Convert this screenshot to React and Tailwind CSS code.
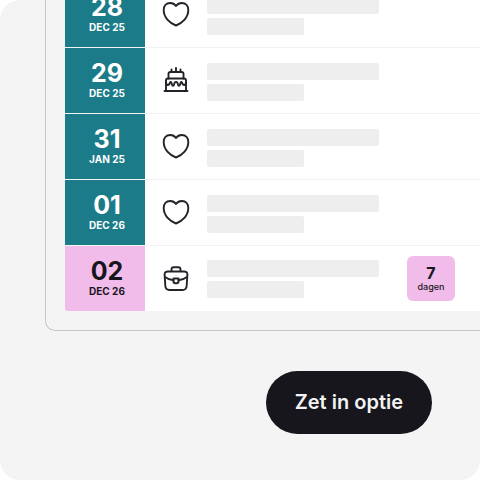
import React from 'react';

const days = [
  { day: '28', month: 'DEC 25', icon: 'heart' },
  { day: '29', month: 'DEC 25', icon: 'cake' },
  { day: '31', month: 'JAN 25', icon: 'heart' },
  { day: '01', month: 'DEC 26', icon: 'heart' },
  { day: '02', month: 'DEC 26', icon: 'briefcase', daysLeft: 7 },
];

const HeartIcon = () => (
  <path d="M14 5C12.500 2.800 10.500 2 8.200 2C4.200 2 1.700 5 1.700 9C1.700 16.500 7.500 22 14 24.500C20.500 22 26.300 16.500 26.300 9C26.300 5 23.800 2 19.800 2C17.500 2 15.500 2.800 14 5Z" />
);

const CakeIcon = () => (
  <>
    <path d="M2.500 24H25.500" />
    <path d="M4 24V13.500Q4 11.500 6 11.500H22Q24 11.500 24 13.500V24" />
    <path d="M6.500 11.500V7Q6.500 5 8.500 5H19.500Q21.500 5 21.500 7V11.500" />
    <path d="M4 14.500C4 19 7 19 8 15.500C8.300 14.800 9 14.800 9.300 15.500L10.200 18Q11 19.500 11.800 18L12.700 15.500Q14 14.500 15.300 15.500L16.200 18Q17 19.500 17.800 18L18.700 15.500C19 14.800 19.700 14.800 20 15.500C21 19 24 19 24 14.500" />
    <path d="M9.500 2.500V5M14 1V5M18.500 2.500V5" />
  </>
);

const BriefcaseIcon = () => (
  <>
    <path d="M6 6.500H22Q25.500 6.500 25.400 9.500L24.700 20.500Q24.500 25 20.500 25H7.500Q3.500 25 3.300 20.500L2.600 9.500Q2.500 6.500 6 6.500Z" />
    <path d="M9.500 6V4.500Q9.500 2.200 11.800 2.200H16.200Q18.500 2.200 18.500 4.500V6" />
    <path d="M3 12Q7 15 11.500 15.300M25 12Q21 15 16.500 15.300" />
    <path d="M11.500 13.500H16.500V16.500Q16.500 18.200 14.800 18.200H13.200Q11.500 18.200 11.500 16.500Z" />
  </>
);

const icons = {
  heart: HeartIcon,
  cake: CakeIcon,
  briefcase: BriefcaseIcon,
};

const DayRow = ({ item }) => {
  const Icon = icons[item.icon];
  const isOption = item.daysLeft !== undefined;

  return (
    <li className="flex items-stretch border-b border-[#f2f2f2] bg-white last:border-b-0">
      <div className={`flex h-[65px] w-20 shrink-0 flex-col items-center justify-center pl-1 ${isOption ? 'bg-[#f2bcea] text-[#17161c]' : 'bg-[#1c7b88] text-white'}`}>
        <span className="text-[25px] leading-6 font-bold">{item.day}</span>
        <span className="text-[10px] leading-4 font-bold">{item.month}</span>
      </div>
      <div className="flex flex-1 items-center pr-[25px] pl-[17px]">
        <svg className="h-7 w-7 shrink-0" viewBox="0 0 28 28" fill="none" stroke="#242329" strokeWidth="1.900" strokeLinecap="round" strokeLinejoin="round" aria-hidden="true">
          <Icon />
        </svg>
        <div className={`ml-[17px] flex w-[172px] shrink-0 flex-col gap-1 ${isOption ? '' : 'pt-0.5'}`}>
          <div className="h-[17px] rounded-xs bg-[#eeeeee]" />
          <div className="h-[17px] w-[97px] rounded-xs bg-[#eeeeee]" />
        </div>
        {isOption && (
          <div className="ml-auto flex h-[45px] w-12 flex-col items-center justify-center rounded-md bg-[#f2bcea] text-[#17161c]">
            <span className="text-base leading-4 font-bold">{item.daysLeft}</span>
            <span className="text-[9px] leading-3 font-medium">dagen</span>
          </div>
        )}
      </div>
    </li>
  );
};

const App = () => {
  return (
    <div className="min-h-screen bg-white">
      <main className="min-h-screen overflow-hidden rounded-[20px] bg-[#f4f4f4] font-['Inter',sans-serif]">
        <section className="-mt-[18px] ml-[45px] rounded-bl-[10px] border-b border-l border-[#c6c6c6] pb-[19px] pl-[19px]">
          <ul className="overflow-hidden rounded-bl-xs">
            {days.map((item) => (
              <DayRow key={item.day} item={item} />
            ))}
          </ul>
        </section>
        <div className="mt-10 flex justify-end pr-12">
          <button type="button" className="rounded-full bg-[#17161c] px-[29px] py-[18px] text-xl leading-[27px] font-semibold text-[#f3f3f3]">
            Zet in optie
          </button>
        </div>
      </main>
    </div>
  );
};

export default App;
